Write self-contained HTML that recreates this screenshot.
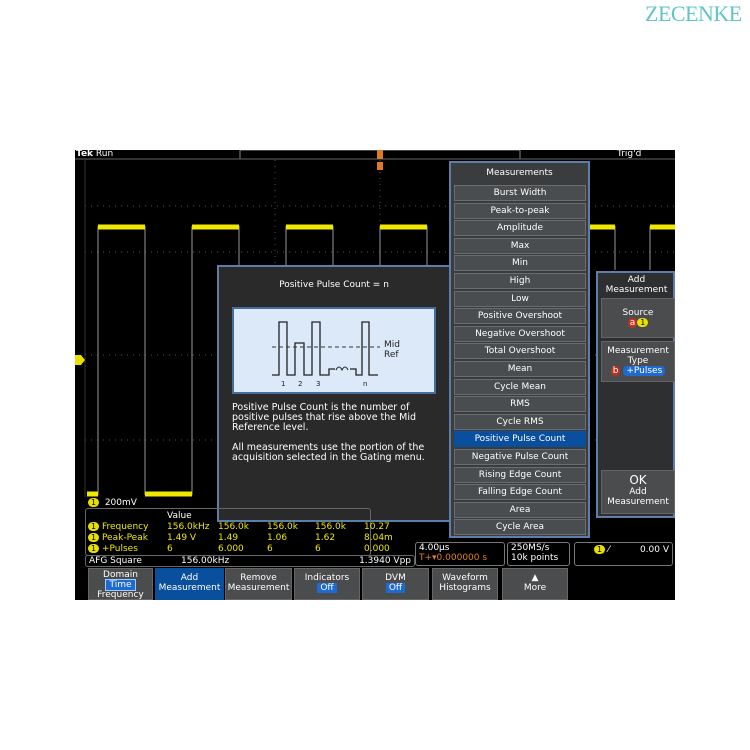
<!DOCTYPE html>
<html><head><meta charset="utf-8"><style>
*{margin:0;padding:0;box-sizing:border-box}
body{width:750px;height:750px;background:#fff;position:relative;overflow:hidden;font-family:"DejaVu Sans","Liberation Sans",sans-serif}
.a{position:absolute}
.scr{left:75px;top:150px;width:600px;height:450px;background:#000}
.t{color:#fff;font-size:9px;white-space:nowrap}
.mi{position:absolute;left:3px;width:132px;height:16px;background:#4a4d4f;border:1px solid #6a6d70;color:#fff;font-size:9px;text-align:center;line-height:14px}
.btn{position:absolute;top:568px;height:32px;background:#4a4c4e;border:1px solid #666;color:#fff;font-size:9px;text-align:center;line-height:10px;padding-top:4px}
.y{display:inline-block;background:#e8e000;color:#000;border-radius:6px;font-size:8px;padding:0 3px;line-height:9px}
.m{position:absolute;color:#f0e800;font-size:9px;white-space:nowrap}
</style></head><body>
<div class="a" style="left:645px;top:1px;font-family:'Liberation Serif',serif;font-size:22px;color:#5fc4cc;letter-spacing:-0.5px">ZECENKE</div>
<div class="a scr"></div>
<svg class="a" style="left:75px;top:150px" width="600" height="450">
<g stroke="#555" stroke-width="1" stroke-dasharray="1,5">
<line x1="10" y1="10" x2="10" y2="347"/><line x1="200" y1="10" x2="200" y2="347"/><line x1="305" y1="10" x2="305" y2="347"/>
<line x1="10" y1="56" x2="600" y2="56"/><line x1="10" y1="102" x2="600" y2="102"/><line x1="10" y1="205" x2="600" y2="205"/><line x1="10" y1="290" x2="600" y2="290"/>
</g>
<line x1="10" y1="10" x2="10" y2="347" stroke="#333"/>
<g stroke="#999" stroke-width="1">
<line x1="23" y1="76" x2="23" y2="345"/><line x1="70" y1="76" x2="70" y2="345"/><line x1="117" y1="76" x2="117" y2="345"/><line x1="164" y1="76" x2="164" y2="345"/><line x1="211" y1="76" x2="211" y2="345"/><line x1="258" y1="76" x2="258" y2="345"/><line x1="305" y1="76" x2="305" y2="345"/><line x1="352" y1="76" x2="352" y2="345"/><line x1="540" y1="76" x2="540" y2="120"/><line x1="575" y1="76" x2="575" y2="120"/>
</g>
<g stroke="#f0e800" stroke-width="5">
<line x1="23" y1="77" x2="70" y2="77"/><line x1="117" y1="77" x2="164" y2="77"/><line x1="211" y1="77" x2="258" y2="77"/><line x1="305" y1="77" x2="352" y2="77"/><line x1="515" y1="77" x2="540" y2="77"/><line x1="575" y1="77" x2="600" y2="77"/>
<line x1="12" y1="344" x2="23" y2="344"/><line x1="70" y1="344" x2="117" y2="344"/>
</g>
<rect x="165" y="0" width="280" height="9" fill="none" stroke="#888"/>
<line x1="0" y1="9" x2="600" y2="9" stroke="#666"/>
<rect x="302" y="0" width="6" height="9" fill="#e07a20"/>
<rect x="302" y="12" width="6" height="8" fill="#e07a20"/>
<polygon points="0,205 6,205 10,210 6,215 0,215" fill="#e8e000"/>
</svg>
<div class="a t" style="left:76px;top:149px"><b>Tek</b> Run</div>
<div class="a t" style="left:617px;top:149px">Trig'd</div>
<div class="a" style="left:217px;top:265px;width:234px;height:257px;background:#2a2a2a;border:2px solid #5c7ea8"></div>
<div class="a t" style="left:217px;top:280px;width:234px;text-align:center">Positive Pulse Count = n</div>
<div class="a" style="left:232px;top:307px;width:204px;height:87px;background:#dbe9f8;border:2px solid #466e9c"></div>
<svg class="a" style="left:232px;top:307px" width="204" height="87">
<path d="M40 68 H47 V15 H55 V68 H63 V36 H72 V68 H80 V15 H88 V68 H97 V62 H103 M118 62 H124 V68 H130 V15 H137 V68 H146" fill="none" stroke="#222" stroke-width="1.3"/>
<line x1="40" y1="40" x2="148" y2="40" stroke="#333" stroke-dasharray="4,3"/>
<path d="M104 63 q3 -6 6 0 q3 -6 6 0" fill="none" stroke="#222"/>
<text x="152" y="40" font-size="9" fill="#222" font-family="DejaVu Sans">Mid</text>
<text x="152" y="50" font-size="9" fill="#222" font-family="DejaVu Sans">Ref</text>
<g font-size="7" fill="#222" font-family="DejaVu Sans"><text x="49" y="79">1</text><text x="66" y="79">2</text><text x="84" y="79">3</text><text x="131" y="79">n</text></g>
</svg>
<div class="a t" style="left:232px;top:403px;line-height:10px;font-size:9.5px">Positive Pulse Count is the number of<br>positive pulses that rise above the Mid<br>Reference level.<br><br>All measurements use the portion of the<br>acquisition selected in the Gating menu.</div>
<div class="a" style="left:449px;top:161px;width:141px;height:377px;background:#3a3c3e;border:2px solid #5c7ea8">
<div class="t" style="position:absolute;left:0;top:5px;width:137px;text-align:center">Measurements</div>
<div class="mi" style="top:22px">Burst Width</div><div class="mi" style="top:39.6px">Peak-to-peak</div><div class="mi" style="top:57.2px">Amplitude</div><div class="mi" style="top:74.8px">Max</div><div class="mi" style="top:92.4px">Min</div><div class="mi" style="top:110px">High</div><div class="mi" style="top:127.6px">Low</div><div class="mi" style="top:145.2px">Positive Overshoot</div><div class="mi" style="top:162.8px">Negative Overshoot</div><div class="mi" style="top:180.4px">Total Overshoot</div><div class="mi" style="top:198px">Mean</div><div class="mi" style="top:215.6px">Cycle Mean</div><div class="mi" style="top:233.2px">RMS</div><div class="mi" style="top:250.8px">Cycle RMS</div><div class="mi" style="top:268.4px;background:#0a4e9e;border-color:#0a4e9e">Positive Pulse Count</div><div class="mi" style="top:286px">Negative Pulse Count</div><div class="mi" style="top:303.6px">Rising Edge Count</div><div class="mi" style="top:321.2px">Falling Edge Count</div><div class="mi" style="top:338.8px">Area</div><div class="mi" style="top:356.4px">Cycle Area</div>
</div>
<div class="a" style="left:596px;top:271px;width:79px;height:247px;background:#2e2f31;border:2px solid #5c7ea8"></div>
<div class="a t" style="left:598px;top:275px;width:77px;text-align:center;line-height:10px">Add<br>Measurement</div>
<div class="a" style="left:601px;top:298px;width:74px;height:40px;background:#4a4c4e;border:1px solid #666"></div>
<div class="a t" style="left:601px;top:308px;width:74px;text-align:center;line-height:10px">Source<br><span style="background:#c03020;border-radius:5px;padding:0 2px">a</span><span class="y">1</span></div>
<div class="a" style="left:601px;top:341px;width:74px;height:41px;background:#4a4c4e;border:1px solid #666"></div>
<div class="a t" style="left:601px;top:346px;width:74px;text-align:center;line-height:10px">Measurement<br>Type<br><span style="background:#c03020;border-radius:5px;padding:0 2px">b</span> <span style="background:#1e6ad0;border-radius:4px;padding:0 3px">+Pulses</span></div>
<div class="a" style="left:601px;top:470px;width:74px;height:44px;background:#4a4c4e;border:1px solid #666"></div>
<div class="a t" style="left:601px;top:475px;width:74px;text-align:center;line-height:10px"><span style="font-size:12px">OK</span><br>Add<br>Measurement</div>
<div class="a t" style="left:88px;top:498px"><span class="y">1</span>&nbsp;&nbsp;200mV</div>
<div class="a" style="left:85px;top:508px;width:286px;height:48px;border:1px solid #666;border-radius:3px"></div>
<div class="m" style="left:167px;top:511px;color:#fff">Value</div>
<div class="m" style="left:88px;top:522px"><span class="y">1</span> Frequency</div>
<div class="m" style="left:88px;top:533px"><span class="y">1</span> Peak-Peak</div>
<div class="m" style="left:88px;top:544px"><span class="y">1</span> +Pulses</div>
<div class="m" style="left:167px;top:522px">156.0kHz</div><div class="m" style="left:218px;top:522px">156.0k</div><div class="m" style="left:267px;top:522px">156.0k</div><div class="m" style="left:315px;top:522px">156.0k</div><div class="m" style="left:364px;top:522px">10.27</div>
<div class="m" style="left:167px;top:533px">1.49 V</div><div class="m" style="left:218px;top:533px">1.49</div><div class="m" style="left:267px;top:533px">1.06</div><div class="m" style="left:315px;top:533px">1.62</div><div class="m" style="left:364px;top:533px">8.04m</div>
<div class="m" style="left:167px;top:544px">6</div><div class="m" style="left:218px;top:544px">6.000</div><div class="m" style="left:267px;top:544px">6</div><div class="m" style="left:315px;top:544px">6</div><div class="m" style="left:364px;top:544px">0.000</div>
<div class="a t" style="left:85px;top:555px;width:330px;height:12px;border:1px solid #666;border-radius:3px;padding-left:3px;line-height:10px">AFG Square<span style="position:absolute;left:95px">156.00kHz</span><span style="position:absolute;right:3px">1.3940 Vpp</span></div>
<div class="a t" style="left:415px;top:542px;width:90px;height:24px;border:1px solid #777;border-radius:3px;padding-left:3px;line-height:10px">4.00µs<br><span style="color:#e08020">T+▾0.000000 s</span></div>
<div class="a t" style="left:507px;top:542px;width:63px;height:24px;border:1px solid #777;border-radius:3px;padding-left:3px;line-height:10px">250MS/s<br>10k points</div>
<div class="a t" style="left:574px;top:542px;width:99px;height:24px;border:1px solid #777;border-radius:3px;padding:2px 3px;line-height:10px"><span style="margin-left:16px" class="y">1</span> ⁄<span style="position:absolute;right:3px">0.00 V</span></div>
<div class="btn" style="left:88px;width:65px;padding-top:1px">Domain<br><span style="background:#1e6ad0;padding:0 3px;border:1px solid #9cf">Time</span><br>Frequency</div>
<div class="btn" style="left:155px;width:69px;background:#0a4e9e;border-color:#0a4e9e">Add<br>Measurement</div>
<div class="btn" style="left:225px;width:67px">Remove<br>Measurement</div>
<div class="btn" style="left:294px;width:66px">Indicators<br><span style="background:#1e6ad0;padding:0 3px">Off</span></div>
<div class="btn" style="left:362px;width:67px">DVM<br><span style="background:#1e6ad0;padding:0 3px">Off</span></div>
<div class="btn" style="left:432px;width:66px">Waveform<br>Histograms</div>
<div class="btn" style="left:502px;width:66px">▲<br>More</div>
</body></html>
